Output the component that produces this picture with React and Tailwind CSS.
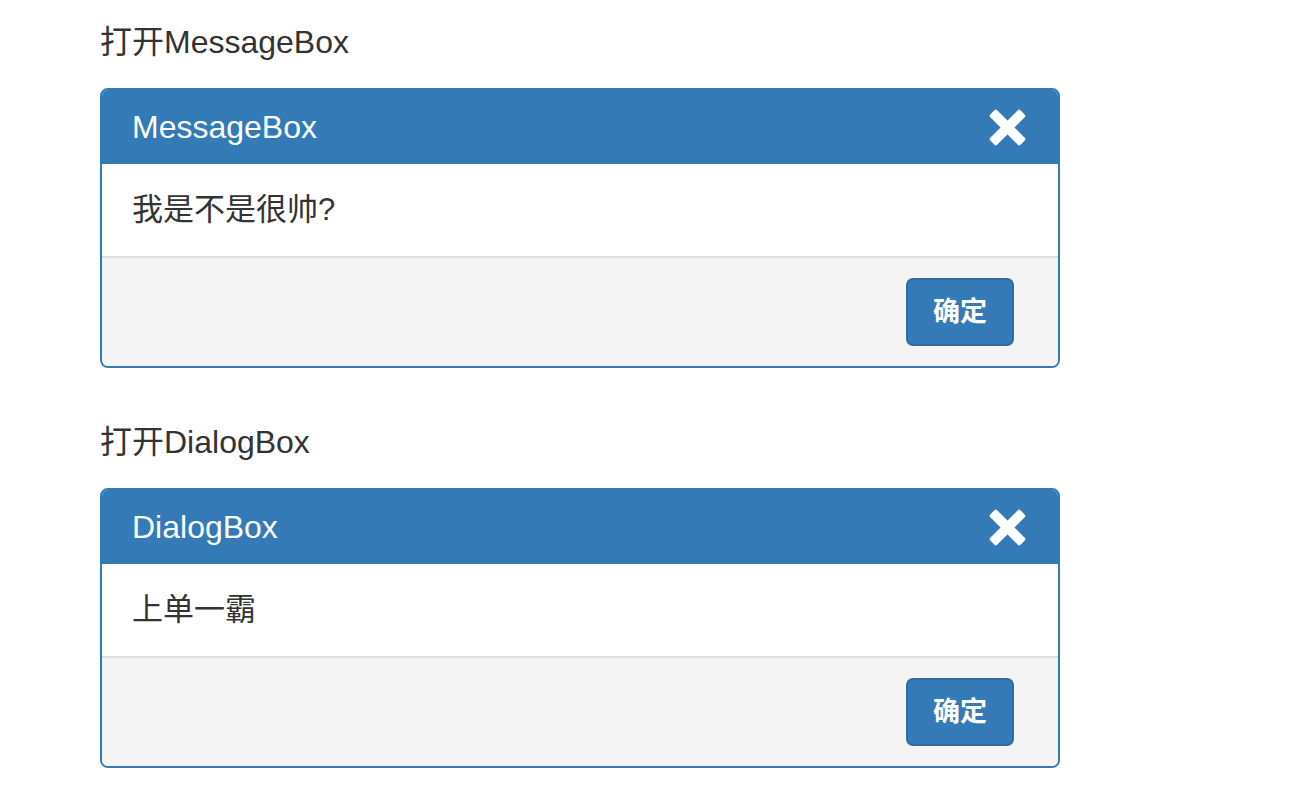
import React from "react";

const font = { fontFamily: '"Liberation Sans", "Noto Sans CJK SC", sans-serif' };

function CloseIcon() {
  return (
    <svg width="37" height="37" viewBox="0 0 38 38" className="text-white">
      <g fill="currentColor" transform="rotate(45 19 19)">
        <rect x="14" y="-3" width="10" height="44" rx="2" />
        <rect x="-3" y="14" width="44" height="10" rx="2" />
      </g>
    </svg>
  );
}

function Box({ title, message }) {
  return (
    <div className="w-[960px] rounded-[8px] border-2 border-[#337ab7] overflow-hidden">
      {/* Header */}
      <div className="h-[74px] bg-[#337ab7] flex items-center justify-between pl-[30px] pr-[32px]">
        <span className="text-white text-[32px]">{title}</span>
        <CloseIcon />
      </div>
      {/* Body */}
      <div className="h-[94px] bg-white flex items-center px-[30px] text-[31px] text-[#333] border-b-2 border-[#ddd]">
        {message}
      </div>
      {/* Footer */}
      <div className="h-[108px] bg-[#f4f4f4] flex items-center justify-end pr-[44px]">
        <button className="w-[108px] h-[68px] rounded-[7px] bg-[#337ab7] border-2 border-[#2e6da4] text-white text-[27px] font-bold">
          确定
        </button>
      </div>
    </div>
  );
}

export default function App() {
  return (
    <div className="min-h-screen bg-white pl-[100px] pt-[20px]" style={font}>
      <div className="text-[32px] leading-[44px] text-[#333] mb-[24px]">打开MessageBox</div>
      <Box title="MessageBox" message="我是不是很帅?" />
      <div className="text-[32px] leading-[44px] text-[#333] mt-[52px] mb-[24px]">打开DialogBox</div>
      <Box title="DialogBox" message="上单一霸" />
    </div>
  );
}
